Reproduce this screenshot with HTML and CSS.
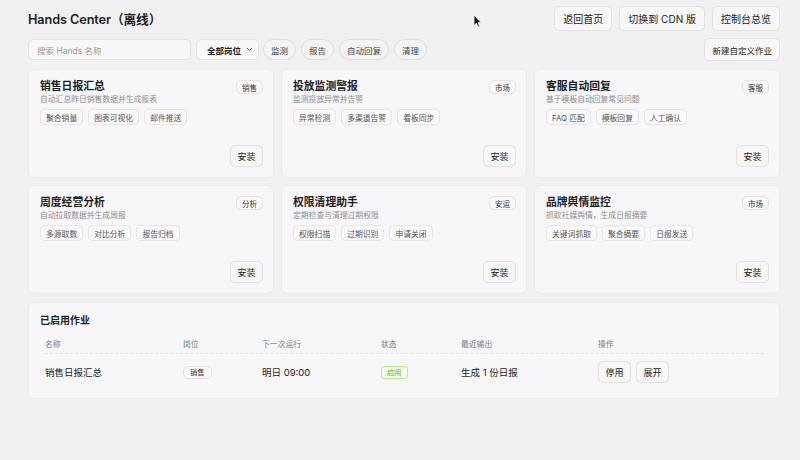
FILE: index.html
```html
<!DOCTYPE html>
<html lang="zh-CN">
<head>
<meta charset="utf-8">
<title>Hands Center</title>
<link rel="stylesheet" href="styles.css">
</head>
<body>
<div class="page">
  <header class="top">
    <h1 class="title">Hands Center（离线）</h1>
    <div class="top-actions">
      <button class="btn btn-lg">返回首页</button>
      <button class="btn btn-lg">切换到 CDN 版</button>
      <button class="btn btn-lg">控制台总览</button>
    </div>
  </header>

  <div class="filters">
    <div class="filters-left">
      <div class="search">搜索 Hands 名称</div>
      <div class="select">全部岗位
        <svg class="chev" width="7" height="5" viewBox="0 0 7 5"><path d="M1 1.2 L3.5 3.6 L6 1.2" fill="none" stroke="#555" stroke-width="1"/></svg>
      </div>
      <span class="chip">监测</span>
      <span class="chip">报告</span>
      <span class="chip">自动回复</span>
      <span class="chip">清理</span>
    </div>
    <button class="btn btn-new">新建自定义作业</button>
  </div>

  <div class="grid">
    <div class="card">
      <div class="card-head">
        <div>
          <div class="card-title">销售日报汇总</div>
          <div class="card-desc">自动汇总昨日销售数据并生成报表</div>
        </div>
        <span class="badge">销售</span>
      </div>
      <div class="tags"><span class="tag">聚合销量</span><span class="tag">图表可视化</span><span class="tag">邮件推送</span></div>
      <div class="card-foot"><button class="btn btn-install">安装</button></div>
    </div>
    <div class="card">
      <div class="card-head">
        <div>
          <div class="card-title">投放监测警报</div>
          <div class="card-desc">监测投放异常并告警</div>
        </div>
        <span class="badge">市场</span>
      </div>
      <div class="tags"><span class="tag">异常检测</span><span class="tag">多渠道告警</span><span class="tag">看板同步</span></div>
      <div class="card-foot"><button class="btn btn-install">安装</button></div>
    </div>
    <div class="card">
      <div class="card-head">
        <div>
          <div class="card-title">客服自动回复</div>
          <div class="card-desc">基于模板自动回复常见问题</div>
        </div>
        <span class="badge">客服</span>
      </div>
      <div class="tags"><span class="tag">FAQ 匹配</span><span class="tag">模板回复</span><span class="tag">人工确认</span></div>
      <div class="card-foot"><button class="btn btn-install">安装</button></div>
    </div>
    <div class="card">
      <div class="card-head">
        <div>
          <div class="card-title">周度经营分析</div>
          <div class="card-desc">自动拉取数据并生成周报</div>
        </div>
        <span class="badge">分析</span>
      </div>
      <div class="tags"><span class="tag">多源取数</span><span class="tag">对比分析</span><span class="tag">报告归档</span></div>
      <div class="card-foot"><button class="btn btn-install">安装</button></div>
    </div>
    <div class="card">
      <div class="card-head">
        <div>
          <div class="card-title">权限清理助手</div>
          <div class="card-desc">定期检查与清理过期权限</div>
        </div>
        <span class="badge">安运</span>
      </div>
      <div class="tags"><span class="tag">权限扫描</span><span class="tag">过期识别</span><span class="tag">申请关闭</span></div>
      <div class="card-foot"><button class="btn btn-install">安装</button></div>
    </div>
    <div class="card">
      <div class="card-head">
        <div>
          <div class="card-title">品牌舆情监控</div>
          <div class="card-desc">抓取社媒舆情，生成日报摘要</div>
        </div>
        <span class="badge">市场</span>
      </div>
      <div class="tags"><span class="tag">关键词抓取</span><span class="tag">聚合摘要</span><span class="tag">日报发送</span></div>
      <div class="card-foot"><button class="btn btn-install">安装</button></div>
    </div>
  </div>

  <section class="panel">
    <h2 class="panel-title">已启用作业</h2>
    <div class="table">
      <div class="row row-head">
        <span>名称</span><span>岗位</span><span>下一次运行</span><span>状态</span><span>最近输出</span><span>操作</span>
      </div>
      <div class="row row-body">
        <span>销售日报汇总</span>
        <span><span class="badge badge-sm">销售</span></span>
        <span>明日 09:00</span>
        <span><span class="status">启用</span></span>
        <span>生成 1 份日报</span>
        <span class="ops"><button class="btn btn-op">停用</button><button class="btn btn-op">展开</button></span>
      </div>
    </div>
  </section>
</div>
<svg class="cursor" width="9" height="14" viewBox="0 0 9 14"><path d="M1 1 L1 11.5 L3.4 9.3 L5 13 L6.6 12.3 L5.1 8.7 L8.2 8.7 Z" fill="#111" stroke="#fff" stroke-width="0.8"/></svg>
</body>
</html>
```

FILE: styles.css
```css
* { box-sizing: border-box; }
html, body { margin: 0; padding: 0; }
body {
  background: #f1f1f1;
  font-family: "Inter", "Noto Sans CJK SC", sans-serif;
  color: #1d1d1f;
  width: 800px;
  height: 460px;
  overflow: hidden;
  position: relative;
}
.page { padding: 6px 20px 0 28px; }

.btn {
  font-family: inherit;
  background: #f7f7f7;
  border: 1px solid #e2e2e2;
  border-radius: 5px;
  color: #222;
  padding: 0;
  cursor: pointer;
}

.top {
  display: flex;
  justify-content: space-between;
  align-items: center;
  height: 25px;
}
.title {
  margin: 0;
  font-size: 12.7px;
  font-weight: 600;
  letter-spacing: -0.1px;
}
.top-actions { display: flex; gap: 7px; }
.btn-lg { height: 25px; padding: 0 8px; font-size: 10px; }

.filters {
  display: flex;
  justify-content: space-between;
  align-items: center;
  height: 23px;
  margin-top: 7px;
}
.filters-left { display: flex; align-items: center; gap: 5px; }
.search {
  width: 163px;
  height: 21px;
  background: #f7f7f7;
  border: 1px solid #e3e3e3;
  border-radius: 5px;
  font-size: 8.5px;
  color: #9a9a9a;
  padding-left: 8px;
  display: flex;
  align-items: center;
}
.select {
  width: 63px;
  height: 21px;
  background: #f8f8f8;
  border: 1px solid #e3e3e3;
  border-radius: 5px;
  font-size: 8.5px;
  font-weight: 600;
  display: flex;
  align-items: center;
  justify-content: space-between;
  padding: 0 5px 0 10px;
  margin-right: -1px;
}
.chev { display: block; }
.chip {
  height: 21px;
  border: 1px solid #dedede;
  background: #f4f4f4;
  border-radius: 11px;
  font-size: 8.5px;
  color: #444;
  padding: 0 7px;
  display: flex;
  align-items: center;
}
.btn-new { height: 23px; padding: 0 7px; font-size: 8.5px; }

.grid {
  display: grid;
  grid-template-columns: repeat(3, 1fr);
  gap: 7px;
  margin-top: 8px;
}
.card {
  background: #f7f6f8;
  border: 1px solid #ebeaec;
  border-radius: 6px;
  height: 109px;
  padding: 10px 10px 10px 11px;
  display: flex;
  flex-direction: column;
}
.card-head { display: flex; justify-content: space-between; align-items: flex-start; }
.card-title { font-size: 10.8px; font-weight: 600; line-height: 14px; }
.card-desc { font-size: 7.8px; color: #8e8e8e; line-height: 10px; }
.badge {
  font-size: 7.5px;
  border: 1px solid #e3e3e3;
  background: #f9f9f9;
  border-radius: 5px;
  height: 14px;
  padding: 0 5px;
  display: inline-flex;
  align-items: center;
  color: #333;
}
.tags { display: flex; gap: 5px; margin-top: 5px; }
.tag {
  font-size: 7.8px;
  color: #555;
  border: 1px solid #e6e6e6;
  background: #f9f9f9;
  border-radius: 4px;
  height: 16px;
  padding: 0 5px;
  display: flex;
  align-items: center;
}
.card-foot { margin-top: auto; display: flex; justify-content: flex-end; }
.btn-install { height: 22px; width: 33px; font-size: 9px; }

.panel {
  margin-top: 8px;
  background: #f7f6f8;
  border: 1px solid #ebeaec;
  border-radius: 6px;
  padding: 9px 10px 8px 11px;
}
.panel-title { margin: 0; font-size: 10px; font-weight: 600; line-height: 16px; }
.table { margin: 0 5px 0 5px; }
.row {
  display: grid;
  grid-template-columns: 138px 79px 119px 80px 137px 1fr;
  align-items: center;
}
.row-head {
  margin-top: 6px;
  height: 20px;
  font-size: 7.8px;
  color: #7d7d7d;
  border-bottom: 1px dashed #e6e5e8;
}
.row-body { height: 36px; font-size: 9.5px; }
.badge-sm { height: 13px; font-size: 7.3px; padding: 0 6px; }
.status {
  display: inline-flex;
  align-items: center;
  height: 13px;
  padding: 0 5px;
  font-size: 7.3px;
  color: #52c41a;
  background: #f4fdea;
  border: 1px solid #b7eb8f;
  border-radius: 3px;
}
.ops { display: flex; gap: 5px; }
.btn-op { height: 22px; width: 33px; font-size: 9px; }

.cursor { position: absolute; left: 473px; top: 14px; }
```
